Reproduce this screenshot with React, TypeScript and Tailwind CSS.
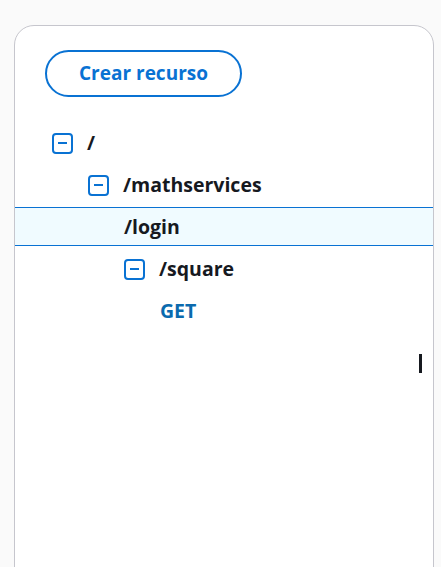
import React from "react";

function MinusBox() {
  return (
    <svg width="21" height="21" viewBox="0 0 21 21" className="shrink-0">
      <rect x="1" y="1" width="19" height="19" rx="3" fill="none" stroke="#0972d3" strokeWidth="2" />
      <rect x="6" y="9" width="9" height="2" fill="#0972d3" />
    </svg>
  );
}

type Row = { label: string; level: number; icon: boolean; selected?: boolean; method?: boolean };

const rows: Row[] = [
  { label: "/", level: 0, icon: true },
  { label: "/mathservices", level: 1, icon: true },
  { label: "/login", level: 2, icon: false, selected: true },
  { label: "/square", level: 2, icon: true },
  { label: "GET", level: 3, icon: false, method: true },
];

const pads = ["pl-[37px]", "pl-[73px]", "pl-[109px]", "pl-[145px]"];

function RowContent({ r }: { r: Row }) {
  return (
    <div className={`flex items-center gap-[14px] h-full ${pads[r.level]}`}>
      {r.icon && <MinusBox />}
      <span
        className={`font-bold text-[19.5px] leading-none ${r.method ? "text-[#0b6aae]" : "text-[#16191f]"}`}
      >
        {r.label}
      </span>
    </div>
  );
}

export default function App() {
  return (
    <div
      className="w-[441px] h-[567px] overflow-hidden bg-[#fafafa] pl-[14px] pt-[25px]"
      style={{ fontFamily: '"Open Sans", "Noto Sans", sans-serif' }}
    >
      <div className="w-[420px] h-[600px] bg-white border border-[#c6c6cd] rounded-[20px] pt-[24px]">
        <div className="pl-[30px]">
          <button className="w-[197px] h-[47px] rounded-full border-2 border-[#0972d3] text-[#0972d3] font-bold text-[19px] flex items-center justify-center">
            Crear recurso
          </button>
        </div>
        <div className="mt-[25px] flex flex-col">
          {rows.map((r) =>
            r.selected ? (
              <div key={r.label} className="mt-[1px] mb-[2px] flex flex-col">
                <div className="h-px bg-[#0972d3]" />
                <div className="h-[37px] bg-[#f0fbff]">
                  <RowContent r={r} />
                </div>
                <div className="h-px bg-[#0972d3]" />
              </div>
            ) : (
              <div key={r.label} className="h-[42px]">
                <RowContent r={r} />
              </div>
            )
          )}
        </div>
        <div className="flex justify-end pr-[11px] mt-[22px]">
          <div className="w-[3px] h-[19px] bg-[#16191f]" />
        </div>
      </div>
    </div>
  );
}
